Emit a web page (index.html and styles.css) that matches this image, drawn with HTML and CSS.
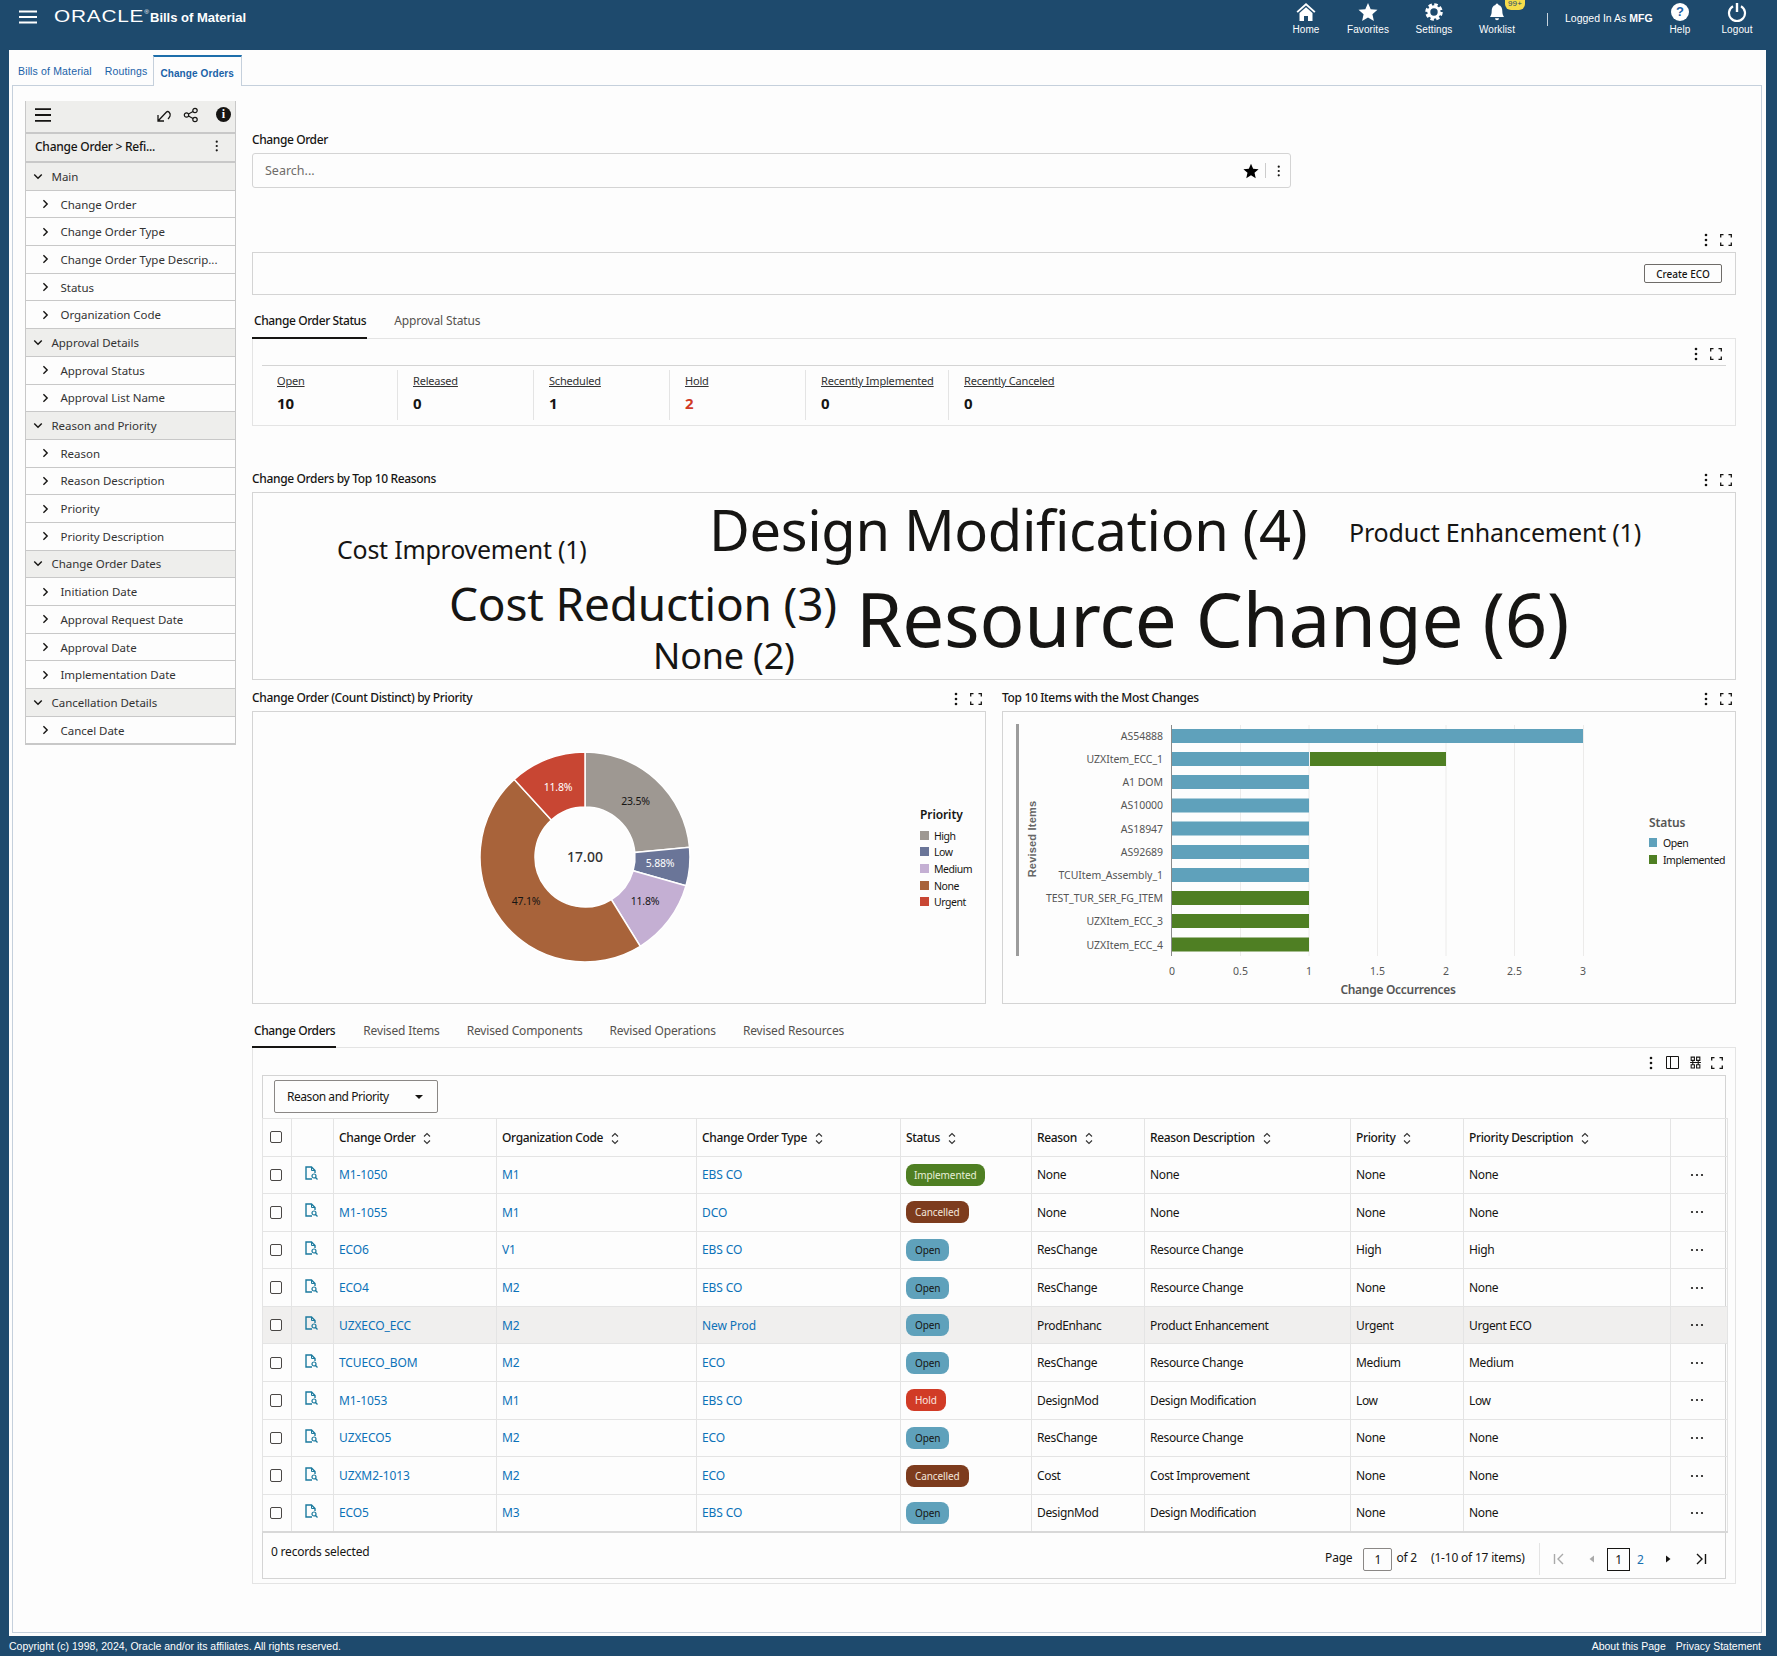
FILE: index.html
```html
<!DOCTYPE html>
<html lang="en">
<head>
<meta charset="utf-8">
<title>Bills of Material</title>
<link rel="stylesheet" href="styles.css">
</head>
<body>
<svg class="defs" width="0" height="0">
  <symbol id="kebab" viewBox="0 0 4 14"><circle cx="2" cy="2" r="1.3"/><circle cx="2" cy="7" r="1.3"/><circle cx="2" cy="12" r="1.3"/></symbol>
  <symbol id="expand" viewBox="0 0 12 12"><path d="M.7 3.5V.7h2.8M8.5.7h2.8v2.8M11.3 8.5v2.8H8.5M3.5 11.3H.7V8.5" fill="none" stroke="#161513" stroke-width="1.3"/></symbol>
  <symbol id="cr" viewBox="0 0 8 12"><path d="M1.5 1.5 6 6l-4.500 4.500" fill="none" stroke="#161513" stroke-width="1.700"/></symbol>
  <symbol id="cd" viewBox="0 0 12 8"><path d="M1.500 1.500 6 6l4.500-4.500" fill="none" stroke="#161513" stroke-width="1.700"/></symbol>
  <symbol id="sort" viewBox="0 0 8 13"><path d="M1 4.500 4 1.500l3 3M1 8.500l3 3 3-3" fill="none" stroke="#333" stroke-width="1.100"/></symbol>
  <symbol id="doc" viewBox="0 0 13 15"><path d="M7 13H1V1h5.500L10 4.500V7" fill="none" stroke="#1b7a9e" stroke-width="1.400"/><path d="M6.500 1v3.500H10" fill="none" stroke="#1b7a9e"/><circle cx="9" cy="10" r="2" fill="none" stroke="#1b7a9e" stroke-width="1.200"/><path d="m10.500 11.500 2 2" stroke="#1b7a9e" stroke-width="1.300"/></symbol>
  <symbol id="dots" viewBox="0 0 14 4"><circle cx="2" cy="2" r="1.100"/><circle cx="7" cy="2" r="1.100"/><circle cx="12" cy="2" r="1.100"/></symbol>
</svg>

<header class="topbar">
  <svg class="burger" viewBox="0 0 18 14"><path d="M0 1.500h18M0 7h18M0 12.500h18" stroke="#fff" stroke-width="2"/></svg>
  <span class="logo">ORACLE<sup class="reg">®</sup></span>
  <span class="appname">Bills of Material</span>
  <nav class="topnav">
    <a class="navitem w62"><svg class="navicon" viewBox="0 0 20 20"><path d="M10 1 0.500 9.500l1.300 1.300L10 3.500l8.200 7.300 1.300-1.300z" fill="#fff"/><path d="M3.500 11 10 5.200 16.500 11v8h-4.500v-5H8v5H3.500z" fill="#fff"/></svg>Home</a>
    <a class="navitem w62"><svg class="navicon" viewBox="0 0 20 20"><path d="m10 1 2.700 6.200 6.800.600-5.100 4.500 1.500 6.700L10 15.400 4.100 19l1.500-6.700L.500 7.800l6.800-.600z" fill="#fff"/></svg>Favorites</a>
    <a class="navitem w70"><svg class="navicon" viewBox="0 0 20 20"><circle cx="10" cy="10" r="7" fill="none" stroke="#fff" stroke-width="3.500" stroke-dasharray="3.300 2.200"/><circle cx="10" cy="10" r="5.200" fill="none" stroke="#fff" stroke-width="3"/></svg>Settings</a>
    <a class="navitem w56 bellwrap"><svg class="navicon" viewBox="0 0 20 20"><path d="M10 1.500a1.500 1.500 0 0 1 1.500 1.500c2.800.800 3.800 3 3.800 6 0 3 .700 4.500 1.700 6H3c1-1.500 1.700-3 1.700-6 0-3 1-5.200 3.800-6A1.500 1.500 0 0 1 10 1.500zM8 16.200h4a2 2 0 0 1-4 0z" fill="#fff"/></svg>Worklist<span class="badge99">99+</span></a>
    <span class="navsep"></span>
    <span class="logged">Logged In As <b>MFG</b></span>
    <a class="navitem w54"><span class="helpicon">?</span>Help</a>
    <a class="navitem w60"><svg class="navicon" viewBox="0 0 20 20"><path d="M6 4.200a8 8 0 1 0 8 0" fill="none" stroke="#fff" stroke-width="2.200"/><path d="M10 1v9" stroke="#fff" stroke-width="2.400"/></svg>Logout</a>
  </nav>
</header>

<main class="page">
  <div class="apptabs">
    <a class="apptab">Bills of Material</a>
    <a class="apptab">Routings</a>
    <a class="apptab current">Change Orders</a>
  </div>
  <div class="tabpanel">
    <aside class="side">
      <div class="sidetool">
        <svg class="sideburger" viewBox="0 0 16 14"><path d="M0 1.200h16M0 7h16M0 12.800h16" stroke="#161513" stroke-width="1.800"/></svg>
        <span class="grow"></span>
        <svg class="ticon" viewBox="0 0 16 16"><path d="M2 8v6h6M2 14l8.500-9c1.500-1.500 4.500 1 3.500 4-.4 1-1 2-2 3" fill="none" stroke="#161513" stroke-width="1.300"/></svg>
        <svg class="ticon share" viewBox="0 0 16 16"><circle cx="3.500" cy="8" r="2.200" fill="none" stroke="#161513" stroke-width="1.200"/><circle cx="12" cy="3.500" r="2.200" fill="none" stroke="#161513" stroke-width="1.200"/><circle cx="12" cy="12.500" r="2.200" fill="none" stroke="#161513" stroke-width="1.200"/><path d="m5.500 7 4.500-2.500M5.500 9l4.500 2.500" stroke="#161513" stroke-width="1.200"/></svg>
        <span class="infoicon">i</span>
      </div>
      <div class="sidetitle"><b>Change Order &gt; Refi...</b><svg class="kebab sm"><use href="#kebab"/></svg></div>
      <div class="sgroup"><svg class="cd"><use href="#cd"/></svg>Main</div>
      <div class="sitem"><svg class="cr"><use href="#cr"/></svg>Change Order</div>
      <div class="sitem"><svg class="cr"><use href="#cr"/></svg>Change Order Type</div>
      <div class="sitem"><svg class="cr"><use href="#cr"/></svg>Change Order Type Descrip...</div>
      <div class="sitem"><svg class="cr"><use href="#cr"/></svg>Status</div>
      <div class="sitem"><svg class="cr"><use href="#cr"/></svg>Organization Code</div>
      <div class="sgroup"><svg class="cd"><use href="#cd"/></svg>Approval Details</div>
      <div class="sitem"><svg class="cr"><use href="#cr"/></svg>Approval Status</div>
      <div class="sitem"><svg class="cr"><use href="#cr"/></svg>Approval List Name</div>
      <div class="sgroup"><svg class="cd"><use href="#cd"/></svg>Reason and Priority</div>
      <div class="sitem"><svg class="cr"><use href="#cr"/></svg>Reason</div>
      <div class="sitem"><svg class="cr"><use href="#cr"/></svg>Reason Description</div>
      <div class="sitem"><svg class="cr"><use href="#cr"/></svg>Priority</div>
      <div class="sitem"><svg class="cr"><use href="#cr"/></svg>Priority Description</div>
      <div class="sgroup"><svg class="cd"><use href="#cd"/></svg>Change Order Dates</div>
      <div class="sitem"><svg class="cr"><use href="#cr"/></svg>Initiation Date</div>
      <div class="sitem"><svg class="cr"><use href="#cr"/></svg>Approval Request Date</div>
      <div class="sitem"><svg class="cr"><use href="#cr"/></svg>Approval Date</div>
      <div class="sitem"><svg class="cr"><use href="#cr"/></svg>Implementation Date</div>
      <div class="sgroup"><svg class="cd"><use href="#cd"/></svg>Cancellation Details</div>
      <div class="sitem"><svg class="cr"><use href="#cr"/></svg>Cancel Date</div>
    </aside>

    <section class="content">
      <div class="fieldlabel">Change Order</div>
      <div class="searchbox">
        <span class="placeholder">Search...</span>
        <svg class="star" viewBox="0 0 20 20"><path d="m10 1 2.700 6.200 6.800.600-5.100 4.500 1.500 6.700L10 15.400 4.100 19l1.500-6.700L.500 7.800l6.800-.600z" fill="#000"/></svg>
        <span class="vbar"></span>
        <svg class="kebab sm"><use href="#kebab"/></svg>
      </div>

      <div class="tools t-eco"><svg class="kebab"><use href="#kebab"/></svg><svg class="expand"><use href="#expand"/></svg></div>
      <div class="ecopanel"><button class="ecobtn" type="button">Create ECO</button></div>

      <div class="tabstrip s1"><a class="tab on">Change Order Status</a><a class="tab">Approval Status</a></div>
      <div class="kpipanel">
        <div class="tools inner"><svg class="kebab"><use href="#kebab"/></svg><svg class="expand"><use href="#expand"/></svg></div>
        <div class="kpis">
          <div class="kpi k1"><u>Open</u><b>10</b></div>
          <div class="kpi k2"><u>Released</u><b>0</b></div>
          <div class="kpi k2"><u>Scheduled</u><b>1</b></div>
          <div class="kpi k2"><u>Hold</u><b class="red">2</b></div>
          <div class="kpi k3"><u>Recently Implemented</u><b>0</b></div>
          <div class="kpi k4"><u>Recently Canceled</u><b>0</b></div>
        </div>
      </div>

      <div class="cardhead h-cloud"><span class="cardtitle">Change Orders by Top 10 Reasons</span><span class="tools"><svg class="kebab"><use href="#kebab"/></svg><svg class="expand"><use href="#expand"/></svg></span></div>
      <div class="cloud">
        <span class="word w-ci">Cost Improvement (1)</span>
        <span class="word w-dm">Design Modification (4)</span>
        <span class="word w-pe">Product Enhancement (1)</span>
        <span class="word w-cr">Cost Reduction (3)</span>
        <span class="word w-rc">Resource Change (6)</span>
        <span class="word w-no">None (2)</span>
      </div>

      <div class="charts">
        <div class="chartcol">
          <div class="cardhead"><span class="cardtitle">Change Order (Count Distinct) by Priority</span><span class="tools"><svg class="kebab"><use href="#kebab"/></svg><svg class="expand"><use href="#expand"/></svg></span></div>
          <div class="chartbox">
            <svg class="chart" viewBox="-1 0 734 293">
              <g transform="translate(332 146)" stroke="#fff" stroke-width="1.500">
                <path fill="#9e9892" d="M0-105A105 105 0 0 1 104.550-9.690L49.790-4.610A50 50 0 0 0 0-50Z"/>
                <path fill="#6a7598" d="M104.550-9.690A105 105 0 0 1 100.990 28.730L48.090 13.680A50 50 0 0 0 49.790-4.610Z"/>
                <path fill="#c4afd3" d="M100.990 28.730A105 105 0 0 1 55.280 89.270L26.320 42.510A50 50 0 0 0 48.090 13.680Z"/>
                <path fill="#a8633a" d="M55.280 89.270A105 105 0 0 1-70.740-77.600L-33.680-36.950A50 50 0 0 0 26.320 42.510Z"/>
                <path fill="#c84633" d="M-70.740-77.600A105 105 0 0 1 0-105L0-50A50 50 0 0 0-33.680-36.950Z"/>
              </g>
              <g class="plabel">
                <text x="382.500" y="94">23.5%</text>
                <text x="407" y="156" class="lt">5.88%</text>
                <text x="392" y="194">11.8%</text>
                <text x="273" y="194">47.1%</text>
                <text x="305" y="80" class="lt">11.8%</text>
              </g>
              <text class="pcenter" x="332" y="151">17.00</text>
              <text class="legtitle" x="667" y="108">Priority</text>
              <g class="legend">
                <rect x="667" y="120" width="9" height="9" fill="#9e9892"/><text x="681" y="129">High</text>
                <rect x="667" y="136" width="9" height="9" fill="#6a7598"/><text x="681" y="145">Low</text>
                <rect x="667" y="153" width="9" height="9" fill="#c4afd3"/><text x="681" y="162">Medium</text>
                <rect x="667" y="170" width="9" height="9" fill="#a8633a"/><text x="681" y="179">None</text>
                <rect x="667" y="186" width="9" height="9" fill="#c84633"/><text x="681" y="195">Urgent</text>
              </g>
            </svg>
          </div>
        </div>
        <div class="chartcol">
          <div class="cardhead"><span class="cardtitle">Top 10 Items with the Most Changes</span><span class="tools"><svg class="kebab"><use href="#kebab"/></svg><svg class="expand"><use href="#expand"/></svg></span></div>
          <div class="chartbox">
            <svg class="chart" viewBox="-1 0 734 293">
              <rect x="13" y="13" width="3" height="232" fill="#9c9c9c"/>
              <text class="axisname" transform="translate(33 128) rotate(-90)">Revised Items</text>
              <g stroke="#ecebea" stroke-width="1">
                <path d="M237.500 14v231M306 14v231M374.500 14v231M443 14v231M511.500 14v231M580.500 14v231"/>
              </g>
              <g fill="#5fa1bb">
                <rect x="169" y="18" width="411" height="14"/>
                <rect x="169" y="41" width="137" height="14"/>
                <rect x="169" y="64" width="137" height="14"/>
                <rect x="169" y="87.500" width="137" height="14"/>
                <rect x="169" y="110.500" width="137" height="14"/>
                <rect x="169" y="134" width="137" height="14"/>
                <rect x="169" y="157" width="137" height="14"/>
              </g>
              <g fill="#4f7f23">
                <rect x="307" y="41" width="136" height="14"/>
                <rect x="169" y="180" width="137" height="14"/>
                <rect x="169" y="203" width="137" height="14"/>
                <rect x="169" y="226.500" width="137" height="14"/>
              </g>
              <path d="M168.500 14v231" stroke="#8a8a8a"/>
              <g class="ylabels">
                <text x="160" y="29">AS54888</text>
                <text x="160" y="52">UZXItem_ECC_1</text>
                <text x="160" y="75">A1 DOM</text>
                <text x="160" y="98">AS10000</text>
                <text x="160" y="122">AS18947</text>
                <text x="160" y="145">AS92689</text>
                <text x="160" y="168">TCUItem_Assembly_1</text>
                <text x="160" y="191">TEST_TUR_SER_FG_ITEM</text>
                <text x="160" y="214">UZXItem_ECC_3</text>
                <text x="160" y="238">UZXItem_ECC_4</text>
              </g>
              <g class="xlabels">
                <text x="169" y="264">0</text><text x="237.500" y="264">0.5</text><text x="306" y="264">1</text>
                <text x="374.500" y="264">1.5</text><text x="443" y="264">2</text><text x="511.500" y="264">2.5</text><text x="580" y="264">3</text>
              </g>
              <text class="xname" x="395" y="283">Change Occurrences</text>
              <text class="legtitle grey" x="646" y="116">Status</text>
              <g class="legend">
                <rect x="646" y="127" width="8" height="9" fill="#5fa1bb"/><text x="660" y="136">Open</text>
                <rect x="646" y="144" width="8" height="9" fill="#4f7f23"/><text x="660" y="153">Implemented</text>
              </g>
            </svg>
          </div>
        </div>
      </div>

      <div class="tabstrip s2">
        <a class="tab on">Change Orders</a><a class="tab">Revised Items</a><a class="tab">Revised Components</a><a class="tab">Revised Operations</a><a class="tab">Revised Resources</a>
      </div>
      <div class="tablepanel">
        <div class="tools inner tbltools">
          <svg class="kebab first"><use href="#kebab"/></svg>
          <svg class="expand wide" viewBox="0 0 13 13"><path d="M.5.500h12v12H.5zM4.500.500v12" fill="none" stroke="#161513"/></svg>
          <svg class="expand wide" viewBox="0 0 12 12"><path d="M2 1h3v3H2zM7 1h3v3H7zM2 8h3v3H2zM7 8h3v3H7zM1 6h10M3.500 4v4M8.500 4v4" fill="none" stroke="#161513"/></svg>
          <svg class="expand"><use href="#expand"/></svg>
        </div>
        <div class="tablebox">
          <div class="selectrow"><div class="select">Reason and Priority<span class="caret"></span></div></div>
          <table class="grid">
            <colgroup><col class="c1"><col class="c2"><col class="c3"><col class="c4"><col class="c5"><col class="c6"><col class="c7"><col class="c8"><col class="c9"><col class="c10"><col class="c11"></colgroup>
            <thead><tr>
              <th><span class="cb"></span></th><th></th>
              <th>Change Order<svg class="sort"><use href="#sort"/></svg></th>
              <th>Organization Code<svg class="sort"><use href="#sort"/></svg></th>
              <th>Change Order Type<svg class="sort"><use href="#sort"/></svg></th>
              <th>Status<svg class="sort"><use href="#sort"/></svg></th>
              <th>Reason<svg class="sort"><use href="#sort"/></svg></th>
              <th>Reason Description<svg class="sort"><use href="#sort"/></svg></th>
              <th>Priority<svg class="sort"><use href="#sort"/></svg></th>
              <th>Priority Description<svg class="sort"><use href="#sort"/></svg></th>
              <th></th>
            </tr></thead>
            <tbody>
              <tr><td><span class="cb"></span></td><td><svg class="doc"><use href="#doc"/></svg></td><td><a>M1-1050</a></td><td><a>M1</a></td><td><a>EBS CO</a></td><td><span class="pill impl">Implemented</span></td><td>None</td><td>None</td><td>None</td><td>None</td><td><svg class="more"><use href="#dots"/></svg></td></tr>
              <tr><td><span class="cb"></span></td><td><svg class="doc"><use href="#doc"/></svg></td><td><a>M1-1055</a></td><td><a>M1</a></td><td><a>DCO</a></td><td><span class="pill canc">Cancelled</span></td><td>None</td><td>None</td><td>None</td><td>None</td><td><svg class="more"><use href="#dots"/></svg></td></tr>
              <tr><td><span class="cb"></span></td><td><svg class="doc"><use href="#doc"/></svg></td><td><a>ECO6</a></td><td><a>V1</a></td><td><a>EBS CO</a></td><td><span class="pill open">Open</span></td><td>ResChange</td><td>Resource Change</td><td>High</td><td>High</td><td><svg class="more"><use href="#dots"/></svg></td></tr>
              <tr><td><span class="cb"></span></td><td><svg class="doc"><use href="#doc"/></svg></td><td><a>ECO4</a></td><td><a>M2</a></td><td><a>EBS CO</a></td><td><span class="pill open">Open</span></td><td>ResChange</td><td>Resource Change</td><td>None</td><td>None</td><td><svg class="more"><use href="#dots"/></svg></td></tr>
              <tr class="hl"><td><span class="cb"></span></td><td><svg class="doc"><use href="#doc"/></svg></td><td><a>UZXECO_ECC</a></td><td><a>M2</a></td><td><a>New Prod</a></td><td><span class="pill open">Open</span></td><td>ProdEnhanc</td><td>Product Enhancement</td><td>Urgent</td><td>Urgent ECO</td><td><svg class="more"><use href="#dots"/></svg></td></tr>
              <tr><td><span class="cb"></span></td><td><svg class="doc"><use href="#doc"/></svg></td><td><a>TCUECO_BOM</a></td><td><a>M2</a></td><td><a>ECO</a></td><td><span class="pill open">Open</span></td><td>ResChange</td><td>Resource Change</td><td>Medium</td><td>Medium</td><td><svg class="more"><use href="#dots"/></svg></td></tr>
              <tr><td><span class="cb"></span></td><td><svg class="doc"><use href="#doc"/></svg></td><td><a>M1-1053</a></td><td><a>M1</a></td><td><a>EBS CO</a></td><td><span class="pill hold">Hold</span></td><td>DesignMod</td><td>Design Modification</td><td>Low</td><td>Low</td><td><svg class="more"><use href="#dots"/></svg></td></tr>
              <tr><td><span class="cb"></span></td><td><svg class="doc"><use href="#doc"/></svg></td><td><a>UZXECO5</a></td><td><a>M2</a></td><td><a>ECO</a></td><td><span class="pill open">Open</span></td><td>ResChange</td><td>Resource Change</td><td>None</td><td>None</td><td><svg class="more"><use href="#dots"/></svg></td></tr>
              <tr><td><span class="cb"></span></td><td><svg class="doc"><use href="#doc"/></svg></td><td><a>UZXM2-1013</a></td><td><a>M2</a></td><td><a>ECO</a></td><td><span class="pill canc">Cancelled</span></td><td>Cost</td><td>Cost Improvement</td><td>None</td><td>None</td><td><svg class="more"><use href="#dots"/></svg></td></tr>
              <tr><td><span class="cb"></span></td><td><svg class="doc"><use href="#doc"/></svg></td><td><a>ECO5</a></td><td><a>M3</a></td><td><a>EBS CO</a></td><td><span class="pill open">Open</span></td><td>DesignMod</td><td>Design Modification</td><td>None</td><td>None</td><td><svg class="more"><use href="#dots"/></svg></td></tr>
            </tbody>
          </table>
          <div class="pager">
            <span class="selcount">0 records selected</span>
            <span class="grow"></span>
            <span class="pg-label">Page</span><span class="pg-input">1</span><span class="pg-of">of 2</span><span class="pg-range">(1-10 of 17 items)</span>
            <span class="pg-nav">
              <svg class="pg-ic" viewBox="0 0 14 14"><path d="M2.500 2v10M11 2 6 7l5 5" fill="none" stroke="#aaa" stroke-width="1.400"/></svg>
              <svg class="pg-ic prev" viewBox="0 0 14 14"><path d="M9 3.500v7L4.500 7z" fill="#aaa"/></svg>
              <span class="pg-cur">1</span><a class="pg-two">2</a>
              <svg class="pg-ic next" viewBox="0 0 14 14"><path d="M5 3.500v7L9.500 7z" fill="#161513"/></svg>
              <svg class="pg-ic" viewBox="0 0 14 14"><path d="M11.500 2v10M3 2l5 5-5 5" fill="none" stroke="#161513" stroke-width="1.400"/></svg>
            </span>
          </div>
        </div>
      </div>
    </section>
  </div>
</main>

<footer class="bottombar">
  <span>Copyright (c) 1998, 2024, Oracle and/or its affiliates. All rights reserved.</span>
  <span class="grow"></span>
  <a>About this Page</a><a class="priv">Privacy Statement</a>
</footer>
</body>
</html>
```

FILE: styles.css
```css
* { box-sizing: border-box; }
html, body { margin: 0; padding: 0; }
body {
  width: 1777px;
  height: 1656px;
  overflow: hidden;
  background: #1e4a6d;
  color: #161513;
  font-family: "Noto Sans", "Liberation Sans", sans-serif;
  font-size: 12px;
  display: flex;
  flex-direction: column;
}
.defs { position: absolute; }
.grow { flex: 1; }

/* top bar */
.topbar { height: 50px; flex: none; display: flex; align-items: flex-start; color: #fff; font-family: "Liberation Sans", Arial, sans-serif; }
.burger { width: 18px; height: 14px; margin: 10px 0 0 19px; }
.logo { margin: 7px 0 0 17px; font-size: 16px; line-height: 20px; letter-spacing: .6px; width: 96px; white-space: nowrap; transform: scaleX(1.3); transform-origin: left center; }
.reg { font-size: 5px; vertical-align: 8px; line-height: 0; }
.appname { font-size: 13px; font-weight: 700; line-height: 20px; margin: 8px 0 0 0; white-space: nowrap; }
.topnav { margin-left: auto; margin-right: 10px; display: flex; align-items: flex-start; }
.navitem { display: flex; flex-direction: column; align-items: center; font-size: 10px; line-height: 12px; color: #fff; position: relative; letter-spacing: .1px; }
.navicon { width: 20px; height: 20px; margin: 2px 0 2px; display: block; }
.w62 { width: 62px; }
.w70 { width: 70px; }
.w56 { width: 56px; }
.w54 { width: 54px; }
.w60 { width: 60px; }
.helpicon { width: 18px; height: 18px; margin: 3px 0 3px; border-radius: 50%; background: #fff; color: #1c62a8; font-weight: 700; font-size: 13px; line-height: 18px; text-align: center; }
.badge99 { position: absolute; top: 0; left: 36px; height: 10px; width: 20px; border-radius: 0 0 6px 6px; background: #f5dc4b; color: #1e4a6d; font-size: 8px; line-height: 7px; text-align: center; }
.navsep { width: 1px; height: 13px; margin: 13px 0 0 22px; background: #c7d3dd; }
.logged { width: 88px; margin: 12px 0 0 17px; font-size: 10.500px; line-height: 12px; white-space: nowrap; }
.logged b { font-weight: 700; }

/* page + app tabs */
.page { height: 1586px; flex: none; margin: 0 11px 0 9px; background: #fdfdfd; display: flex; flex-direction: column; }
.apptabs { height: 35px; flex: none; padding: 5px 0 0 9px; display: flex; align-items: stretch; font-family: "Liberation Sans", Arial, sans-serif; font-size: 10.500px; }
.apptab { color: #1a62a8; padding: 10px 0 0; margin-right: 13px; white-space: nowrap; letter-spacing: .15px; }
.apptab.current { font-weight: 700; margin: 0 0 -1px -7px; padding: 11px 6px 0; width: 89px; letter-spacing: .1px; border: 1px solid #c5d0dc; border-top: 2px solid #1d6eaa; border-bottom: 0; background: #fdfdfd; position: relative; font-size: 10px; }
.tabpanel { flex: 1; margin: 0 4px 3px 3px; border: 1px solid #c5d0dc; padding: 15px 0 0 12px; display: flex; align-items: flex-start; }

/* sidebar */
.side { width: 211px; flex: none; border: 1px solid #c8c8c8; border-top: 0; color: #333; }
.sidetool { height: 33px; background: #eeeeec; border-bottom: 2px solid #c8c8c8; display: flex; align-items: center; padding: 0 3px 4px 9px; }
.sideburger { width: 16px; height: 14px; }
.ticon { width: 16px; height: 16px; margin-right: 11px; position: relative; left: -2px; }
.ticon.share { margin-right: 13px; }
.infoicon { width: 15px; height: 15px; border-radius: 50%; background: #161513; color: #fff; text-align: center; font: 700 12px/15px "Liberation Serif", serif; margin-left: 2px; margin-right: 1px; }
.sidetitle { height: 29px; background: #eeeeec; border-bottom: 2px solid #c8c8c8; display: flex; align-items: center; justify-content: space-between; padding: 0 16.500px 3px 9px; color: #161513; }
.sidetitle b { font-weight: 500; font-size: 12px; letter-spacing: -.25px; }
.sgroup, .sitem { height: 27.700px; border-bottom: 1px solid #c8c8c8; display: flex; align-items: center; font-size: 11.500px; letter-spacing: -.03px; white-space: nowrap; }
.sgroup { background: #eeeeec; padding-left: 7px; }
.sitem { padding-left: 16px; }
.cd { width: 10px; height: 7px; margin-right: 8.500px; }
.cr { width: 7px; height: 10px; margin-right: 11.500px; }

/* main column */
.content { width: 1484px; margin-left: 16px; flex: none; }
.fieldlabel { margin-top: 31px; height: 16px; line-height: 16px; font-weight: 500; letter-spacing: -.4px; }
.searchbox { margin-top: 5px; width: 1039px; height: 35px; border: 1px solid #d4d4d4; border-radius: 3px; display: flex; align-items: center; padding: 0 10px 0 12px; }
.placeholder { flex: 1; color: #6f6c69; font-size: 12.500px; }
.star { width: 16px; height: 16px; }
.vbar { width: 1px; height: 15px; background: #ccc; margin: 0 11px 0 6px; }
.kebab { width: 4px; height: 14px; fill: #161513; display: block; }
.kebab.sm { width: 3.500px; height: 12px; }
.expand { width: 12px; height: 12px; display: block; }
.tools { display: flex; align-items: center; gap: 12.500px; justify-content: flex-end; }
.t-eco { margin-top: 45px; height: 19px; padding: 0 4px 5px 0; }
.ecopanel { height: 43px; border: 1px solid #d4d4d4; display: flex; align-items: center; justify-content: flex-end; padding-right: 13px; }
.ecobtn { width: 78px; height: 19px; padding: 0; background: #fdfdfd; border: 1px solid #6f6c69; border-radius: 2px; font: 500 10px "Noto Sans", sans-serif; color: #161513; }

.tabstrip { display: flex; border-bottom: 1px solid #e4e4e4; }
.s1 { margin-top: 17px; height: 27px; }
.s2 { margin-top: 16px; height: 28px; }
.tab { color: #55524f; margin-right: 23px; padding: 0 2px; height: 27px; line-height: 18px; letter-spacing: -.15px; white-space: nowrap; }
.s2 .tab { height: 28px; line-height: 21.500px; }
.tab.on { color: #161513; font-weight: 500; border-bottom: 2px solid #161513; margin-bottom: -1px; margin-right: 25px; letter-spacing: -.4px; padding: 0 1px 0 2px; }

.kpipanel { height: 87px; border: 1px solid #e4e4e4; border-top: 0; padding: 0 9px; }
.tools.inner { height: 27px; padding: 4px 4px 0 0; border-bottom: 1px solid #d4d4d4; }
.kpis { display: flex; margin-top: 4px; height: 50px; font-size: 11px; }
.kpi { display: flex; flex-direction: column; padding: 3px 0 0 15px; border-right: 1px solid #e4e4e4; letter-spacing: -.2px; }
.kpi u { line-height: 15px; color: #333; }
.kpi b { font-size: 15px; line-height: 20px; margin-top: 5px; font-weight: 700; letter-spacing: 0; }
.kpi .red { color: #d13b26; }
.k1, .k2 { width: 136px; }
.k3 { width: 143px; }
.k4 { width: 170px; border-right: 0; }

.cardhead { height: 22px; display: flex; align-items: center; justify-content: space-between; padding-right: 4px; }
.cardtitle { font-weight: 500; letter-spacing: -.35px; position: relative; top: -3px; }
.cardhead .tools { position: relative; top: -1px; }
.h-cloud { margin-top: 44px; }
.cloud { height: 188px; border: 1px solid #d4d4d4; position: relative; overflow: hidden; }
.word { position: absolute; white-space: nowrap; line-height: 1; color: #161513; transform: translateY(-50%); letter-spacing: -.2px; }
.w-ci { left: 84px; top: 56px; font-size: 24.900px; }
.w-dm { left: 456px; top: 36px; font-size: 56px; letter-spacing: -.35px; }
.w-pe { left: 1096px; top: 39px; font-size: 25px; }
.w-cr { left: 196px; top: 110px; font-size: 46px; }
.w-rc { left: 603px; top: 125px; font-size: 74.500px; }
.w-no { left: 400px; top: 163px; font-size: 36px; }

.charts { display: grid; grid-template-columns: 734px 734px; gap: 16px; margin-top: 9px; }
.chartbox { height: 293px; border: 1px solid #d4d4d4; }
.chart { display: block; margin: -1px; width: calc(100% + 2px); height: calc(100% + 2px); font-family: "Noto Sans", sans-serif; }
.plabel text { font-size: 10.500px; text-anchor: middle; fill: #161513; letter-spacing: -.2px; }
.plabel .lt { fill: #fff; }
.pcenter { font-size: 14px; font-weight: 500; text-anchor: middle; fill: #333; }
.legtitle { font-size: 12px; font-weight: 600; fill: #161513; letter-spacing: -.1px; }
.legtitle.grey { fill: #555; }
.legend text { font-size: 10.500px; fill: #161513; letter-spacing: -.45px; }
.axisname { font: 700 11px "Liberation Sans", sans-serif; fill: #666; text-anchor: middle; letter-spacing: .2px; }
.ylabels text { font-size: 10.500px; fill: #555; text-anchor: end; letter-spacing: -.05px; }
.xlabels text { font-size: 10.500px; fill: #555; text-anchor: middle; }
.xname { font-size: 12px; font-weight: 600; fill: #555; text-anchor: middle; letter-spacing: -.3px; }

.tablepanel { height: 536px; border: 1px solid #e4e4e4; border-top: 0; padding: 0 9px; }
.tools.tbltools { border-bottom: 0; gap: 9.500px; padding: 2px 3px 0 0; }
.kebab.first { margin-right: 3.500px; }
.expand.wide { width: 13px; height: 13px; }
.tablebox { height: 504px; border: 1px solid #d4d4d4; }
.selectrow { height: 41.500px; padding: 4px 0 0 11px; }
.select { width: 164px; height: 33px; border: 1px solid #8a8785; border-radius: 2px; display: flex; align-items: center; padding-left: 12px; letter-spacing: -.45px; position: relative; }
.caret { position: absolute; left: 139.500px; top: 14px; border: 4px solid transparent; border-top: 4.500px solid #161513; border-bottom: 0; }
.grid { width: 1465px; table-layout: fixed; border-collapse: collapse; margin-left: -1px; letter-spacing: -.35px; }
.c1 { width: 29px; } .c2 { width: 42px; } .c3 { width: 163px; } .c4 { width: 200px; } .c5 { width: 204px; } .c6 { width: 131px; } .c7 { width: 113px; } .c8 { width: 206px; } .c9 { width: 113px; } .c10 { width: 207px; } .c11 { width: 57px; }
.grid th, .grid td { border: 1px solid #e4e4e4; padding: 0 0 0 5px; height: 37.600px; text-align: left; white-space: nowrap; overflow: hidden; }
.grid th { font-weight: 500; height: 38px; }
.grid tbody tr:last-child td { border-bottom: 2px solid #d8d8d8; }
.grid a { color: #0c72b8; letter-spacing: -.1px; }
.hl td { background: #f0efee; }
.cb { display: block; width: 12px; height: 12.500px; border: 1.600px solid #4a4745; border-radius: 2px; background: #fdfdfd; margin-left: 2px; }
.doc { display: block; width: 13px; height: 15px; margin: -3px 0 0 7.500px; }
.sort { width: 8px; height: 13px; margin-left: 8px; vertical-align: -3px; }
.more { display: block; width: 14px; height: 4px; fill: #161513; margin-left: 13.500px; }
.pill { display: inline-block; height: 22px; line-height: 22px; border-radius: 8px; padding: 0 9px; font-size: 10px; letter-spacing: -.1px; }
.impl { background: #4f7f23; color: #e8f0d8; padding: 0 8px; }
.canc { background: #7d3c1e; color: #f4e6dc; }
.open { background: #5fa1bb; color: #161513; }
.hold { background: #d13b26; color: #fbe6e0; }

.pager { display: flex; align-items: flex-start; padding: 0 0 0 8px; letter-spacing: -.2px; }
.selcount { margin-top: 11.500px; line-height: 16px; }
.pg-label { margin-top: 17.500px; line-height: 16px; }
.pg-input { width: 29px; height: 23px; margin: 15.500px 0 0 11px; border: 1px solid #8a8785; border-radius: 2px; text-align: center; line-height: 21px; }
.pg-of { margin: 17.500px 0 0 4px; line-height: 16px; }
.pg-range { margin: 17.500px 0 0 14px; line-height: 16px; width: 108px; white-space: nowrap; }
.pg-nav { width: 186px; height: 32px; margin-top: 10.500px; border-left: 1px solid #e4e4e4; display: flex; align-items: center; padding-left: 12px; }
.pg-ic { width: 14px; height: 14px; flex: none; }
.prev { margin-left: 19px; }
.pg-cur { width: 23px; height: 23px; border: 1px solid #161513; margin-left: 8px; text-align: center; line-height: 21px; }
.pg-two { color: #1a70b0; margin-left: 7px; width: 8px; }
.next { margin-left: 16px; }
.next + .pg-ic { margin-left: 19px; }

/* bottom bar */
.bottombar { flex: 1; display: flex; align-items: center; padding: 0 16px 0 9px; color: #fff; font: 10.500px "Liberation Sans", Arial, sans-serif; }
.priv { margin-left: 10px; }
```
